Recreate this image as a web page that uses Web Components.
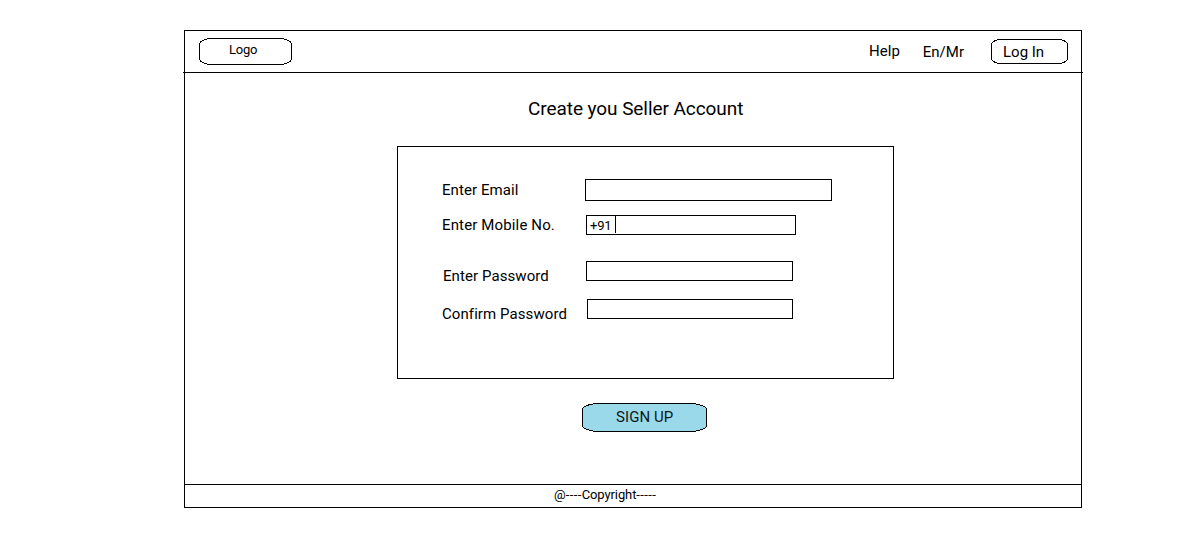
<!DOCTYPE html>
<html lang="en">
<head>
<meta charset="utf-8">
<title>Create Seller Account</title>
<style>
body{margin:0;background:#fff;color:#000;font-family:Roboto,"Liberation Sans",sans-serif;overflow:hidden}
</style>
</head>
<body>
<seller-page></seller-page>
<script>
function define(name, html, setup){
  customElements.define(name, class extends HTMLElement{
    connectedCallback(){
      if(this.shadowRoot) return;
      this.attachShadow({mode:'open'}).innerHTML = html;
      if(setup) setup(this, this.shadowRoot);
    }
  });
}

// Outlined pill with elliptical corners, sized by its width and height attributes.
define('outline-pill', `
<style>
:host{display:grid;box-sizing:border-box;flex:none}
svg,.text{grid-area:1/1}
svg{display:block}
.text{white-space:pre}
</style>
<svg shape-rendering="crispEdges" fill="none" stroke="#000"><rect x=".5" y=".5"/></svg>
<div class="text"><slot></slot></div>`, (el, root) => {
  const w = +el.getAttribute('width'), h = +el.getAttribute('height');
  const svg = root.querySelector('svg'), r = root.querySelector('rect');
  svg.setAttribute('width', w); svg.setAttribute('height', h);
  r.setAttribute('width', w - 1); r.setAttribute('height', h - 1);
  r.setAttribute('rx', el.getAttribute('rx')); r.setAttribute('ry', el.getAttribute('ry'));
  r.setAttribute('fill', el.getAttribute('fill') || 'none');
  el.style.width = w + 'px'; el.style.height = h + 'px';
});

define('page-header', `
<style>
:host{display:flex;align-items:flex-start;box-sizing:border-box;height:42px;margin:0 -2px;padding:7px 15px 0 16px;border-bottom:1px solid #000;font-size:15px;line-height:20px}
.logo{font-size:13px;letter-spacing:-.2px}
.logo span{display:block;padding:2px 0 0 30px}
.help{margin:3px 0 0 auto}
.lang{margin:4px 0 0 23px}
.login{margin:1px 0 0 27px}
.login span{display:block;padding:3px 0 0 12px}
</style>
<outline-pill class="logo" width="93" height="27" rx="12" ry="6"><span>Logo</span></outline-pill>
<span class="help">Help</span>
<span class="lang">En/Mr</span>
<outline-pill class="login" width="77" height="25" rx="10" ry="5"><span>Log In</span></outline-pill>`);

define('form-field', `
<style>
:host{display:flex;align-items:flex-start;font-size:15px;line-height:20px}
label{width:var(--label-width,144px);flex:none;margin-top:var(--label-top,0);white-space:nowrap;letter-spacing:var(--label-tracking,.08px)}
.box{display:flex;box-sizing:border-box;width:var(--box-width);height:var(--box-height,20px);border:1px solid #000;font-size:13px;flex:none}
</style>
<label></label><div class="box"><slot></slot></div>`, (el, root) => {
  root.querySelector('label').textContent = el.getAttribute('label');
});

define('dial-code', `
<style>
:host{display:block;box-sizing:border-box;width:29px;height:17px;padding-left:3px;border-right:1px solid #000;line-height:19px;letter-spacing:-.2px}
</style><slot></slot>`);

define('signup-form', `
<style>
:host{display:block;box-sizing:border-box;width:497px;height:233px;border:1px solid #000;padding:32px 0 0 44px}
.email{--label-width:143px;--box-width:247px;--box-height:22px;--label-top:1px}
.mobile{--box-width:210px;--label-tracking:.14px;margin-top:14px}
.pass{--label-width:143px;--box-width:207px;--label-top:5px;margin:26px 0 0 1px}
.confirm{--label-width:145px;--box-width:206px;--label-top:5px;margin-top:13px}
</style>
<form-field class="email" label="Enter Email"></form-field>
<form-field class="mobile" label="Enter Mobile No."><dial-code>+91</dial-code></form-field>
<form-field class="pass" label="Enter Password"></form-field>
<form-field class="confirm" label="Confirm Password"></form-field>`);

define('page-footer', `
<style>
:host{display:block;box-sizing:border-box;height:23px;margin-top:auto;border-top:1px solid #000;padding-left:369px;font-size:13px;line-height:20px}
::slotted(i){font-style:normal;letter-spacing:.4px}
::slotted(b){font-weight:400;letter-spacing:-.1px}
</style><slot></slot>`);

define('seller-page', `
<style>
:host{display:flex;flex-direction:column;box-sizing:border-box;width:898px;height:478px;margin:30px 0 0 184px;border:1px solid #000}
h1{margin:23px 0 0 343px;font-weight:400;font-size:19px;line-height:26px;letter-spacing:-.07px;white-space:nowrap}
signup-form{margin:24px 0 0 212px}
.signup{margin:24px 0 0 397px;font-size:15px;line-height:20px;letter-spacing:.08px;color:#10181b}
.signup span{display:block;padding:4px 0 0 34px}
</style>
<page-header></page-header>
<h1>Create you Seller Account</h1>
<signup-form></signup-form>
<outline-pill class="signup" width="125" height="29" rx="17" ry="6" fill="#99d9ea"><span>SIGN UP</span></outline-pill>
<page-footer>@<i>----</i><b>Copyright</b><i>-----</i></page-footer>`);
</script>
</body>
</html>
